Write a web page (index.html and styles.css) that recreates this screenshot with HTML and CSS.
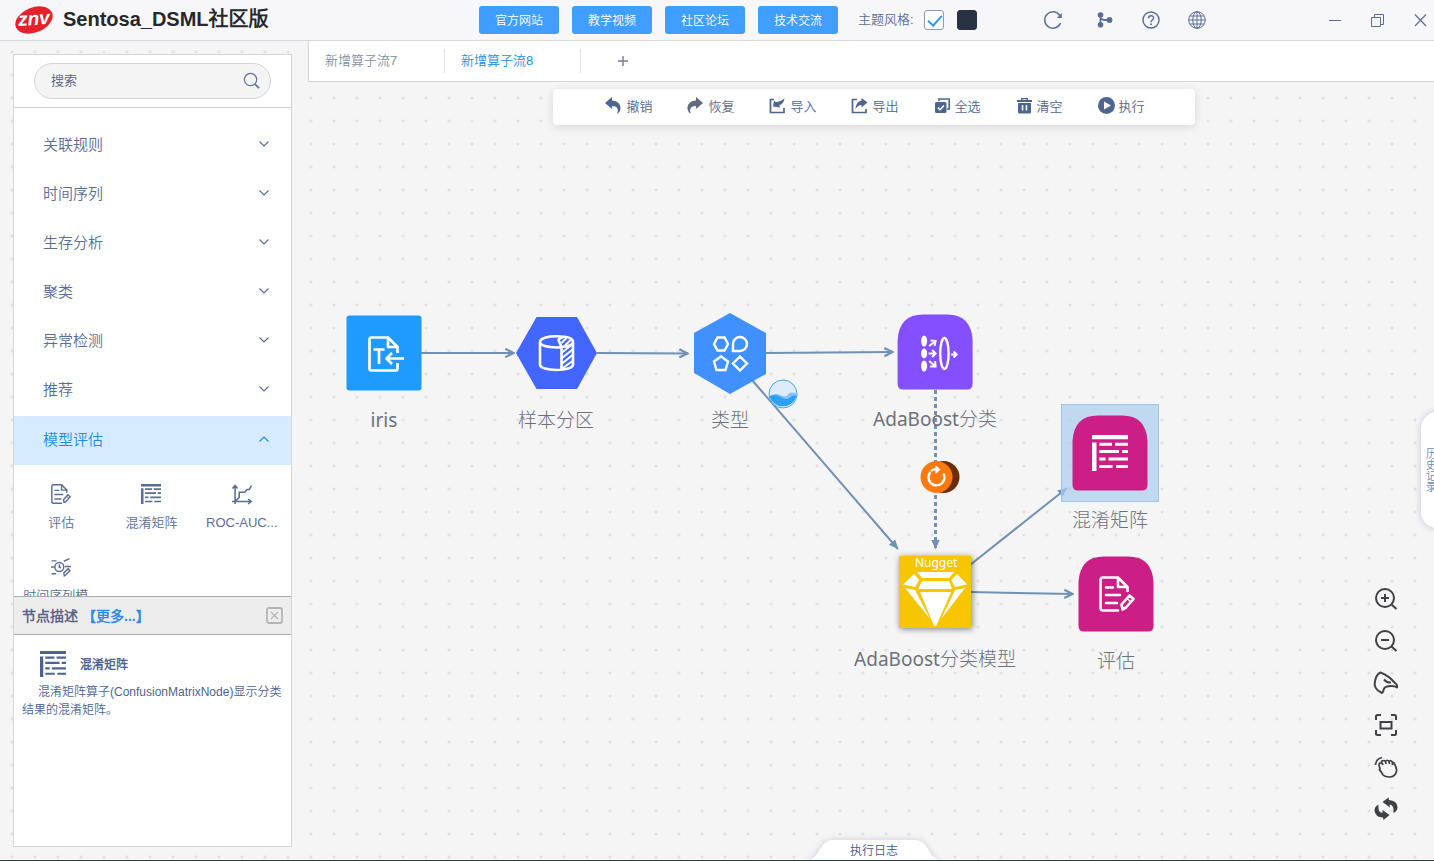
FILE: index.html
```html
<!DOCTYPE html>
<html lang="zh-CN">
<head>
<meta charset="utf-8">
<title>Sentosa_DSML社区版</title>
<link rel="stylesheet" href="styles.css">
</head>
<body>
<svg class="defs" aria-hidden="true">
  <symbol id="i-matrix" viewBox="0 0 36 36"><path fill="currentColor" d="M0 0h36v4.3H0zM0 7.5h4.5V36H0zM7.3 7.7H20v3H7.3zM23 7.7h13v3H23zM7.3 15H27v3H7.3zM30 15h6v3h-6zM7.3 22.6H13.500v3H7.300zM16.500 22.600H36v3H16.500zM7.300 30H20.500v3H7.300zM24 30h12v3H24z"/></symbol>
  <symbol id="i-report" viewBox="0 0 36 36"><g fill="none" stroke="currentColor" stroke-width="2.600" stroke-linejoin="round" stroke-linecap="round"><path d="M19 34.500H4Q1.500 34.500 1.500 32V4Q1.500 1.500 4 1.500H19L28.500 11V15M19 1.500V11H28.500M7 11.500H14M7 19H21M7 27H18M23.500 33.500L22.500 28.500L30.500 19.500L34.500 23L27 31.500Z"/><path stroke-width="1.600" d="M28 22.500L32 26"/></g></symbol>
  <symbol id="i-down" viewBox="0 0 12 12"><path fill="none" stroke="currentColor" stroke-width="1.200" d="M1.500 3.500L6 8L10.500 3.500"/></symbol>
</svg>

<header class="topbar">
  <div class="brand">
    <svg class="logo" viewBox="0 0 38 30" aria-hidden="true">
      <ellipse cx="19" cy="15" rx="19.500" ry="12.500" fill="#e3222b" transform="rotate(-22 19 15)"/>
      <text class="logo-text" x="19" y="20" text-anchor="middle" transform="rotate(-4 19 15)">znv</text>
    </svg>
    <h1>Sentosa_DSML社区版</h1>
  </div>
  <nav class="links">
    <button class="link-btn">官方网站</button>
    <button class="link-btn">教学视频</button>
    <button class="link-btn">社区论坛</button>
    <button class="link-btn">技术交流</button>
  </nav>
  <div class="theme">
    <label for="light">主题风格:</label>
    <input class="swatch light" id="light" type="checkbox" checked>
    <input class="swatch dark" type="checkbox" aria-label="深色">
  </div>
  <div class="sys">
    <button class="ico" aria-label="刷新"><svg viewBox="0 0 18 18"><path fill="none" stroke="currentColor" stroke-width="1.500" d="M15.800 4.500A8.200 8.200 0 1 0 16.600 12"/><path fill="currentColor" d="M17.800 2V7H12.800z"/></svg></button>
    <button class="ico share" aria-label="分支"><svg viewBox="0 0 18 18"><path fill="none" stroke="currentColor" stroke-width="1.800" d="M4.500 4V14M4.500 7.500L8 9H14"/><circle cx="4.500" cy="4" r="2.800" fill="currentColor"/><circle cx="4.500" cy="13.800" r="2.800" fill="currentColor"/><circle cx="13.500" cy="9" r="2.900" fill="currentColor"/></svg></button>
    <button class="ico" aria-label="帮助"><svg viewBox="0 0 18 18"><g fill="none" stroke="currentColor" stroke-width="1.400"><circle cx="9" cy="9" r="8"/><path d="M6.500 7.200C6.500 3.900 11.600 4 11.600 7C11.600 9 9 9 9 11.200"/></g><circle cx="9" cy="13.200" r="1" fill="currentColor"/></svg></button>
    <button class="ico" aria-label="语言"><svg viewBox="0 0 18 18"><g fill="none" stroke="currentColor" stroke-width="1"><circle cx="9" cy="9" r="8.300"/><ellipse cx="9" cy="9" rx="4.200" ry="8.300"/><path d="M9 .7V17.300M.7 9H17.300M2 5H16M2 13H16"/></g></svg></button>
  </div>
  <div class="win">
    <button class="ico" aria-label="最小化"><svg viewBox="0 0 18 18"><path stroke="currentColor" d="M3 9.500H15"/></svg></button>
    <button class="ico" aria-label="还原"><svg viewBox="0 0 18 18"><path fill="none" stroke="currentColor" d="M2.500 6.500H11.500V15.500H2.500ZM5.500 6V3.500H14.500V13.500H12"/></svg></button>
    <button class="ico" aria-label="关闭"><svg viewBox="0 0 18 18"><path stroke="currentColor" stroke-width="1.200" d="M3 3.500L14 15M14 3.500L3 15"/></svg></button>
  </div>
</header>

<div class="app">
  <aside class="sidebar">
    <div class="search">
      <input type="text" placeholder="搜索" aria-label="搜索">
      <svg class="search-ico" viewBox="0 0 18 18" aria-hidden="true"><circle cx="8" cy="8" r="6.500" fill="none" stroke="currentColor" stroke-width="1.300"/><path stroke="currentColor" stroke-width="1.800" d="M12.500 12.500L17 17"/></svg>
    </div>
    <div class="groups">
      <button class="group">关联规则<svg><use href="#i-down"/></svg></button>
      <button class="group">时间序列<svg><use href="#i-down"/></svg></button>
      <button class="group">生存分析<svg><use href="#i-down"/></svg></button>
      <button class="group">聚类<svg><use href="#i-down"/></svg></button>
      <button class="group">异常检测<svg><use href="#i-down"/></svg></button>
      <button class="group">推荐<svg><use href="#i-down"/></svg></button>
      <button class="group open">模型评估<svg><use href="#i-down"/></svg></button>
      <div class="ops">
        <button class="op"><svg><use href="#i-report"/></svg><span>评估</span></button>
        <button class="op"><svg><use href="#i-matrix"/></svg><span>混淆矩阵</span></button>
        <button class="op"><svg viewBox="0 0 36 36"><g fill="none" stroke="currentColor" stroke-width="2.800"><path d="M5.500 36V3M1 8L5.500 2.500L10 8M0 31.500H34M29 27L34.500 31.500L29 36M6 31L13 24V15H23L27 10H31L35 3"/></g></svg><span>ROC-AUC...</span></button>
        <button class="op"><svg viewBox="0 0 36 36"><g fill="none" stroke="currentColor" stroke-width="2.600"><circle cx="15" cy="18" r="8"/><path d="M15 13V19H18M1 7H10M0 18H6M1 30H9M23 8L33 3M25 17H36M24 34L23 29L31 21L34 24.500L27 32Z"/></g></svg><span>时间序列模...</span></button>
      </div>
    </div>
    <section class="desc">
      <div class="desc-head">
        <strong>节点描述</strong><a href="#">【更多...】</a>
        <button class="close" aria-label="关闭描述"><svg viewBox="0 0 17 17"><rect x="1" y="1" width="15" height="15" rx="2" fill="none" stroke="currentColor" stroke-width="1.800"/><path stroke="currentColor" stroke-width="1.200" d="M5 5L12 12M12 5L5 12"/></svg></button>
      </div>
      <div class="desc-title"><svg><use href="#i-matrix"/></svg><strong>混淆矩阵</strong></div>
      <p>混淆矩阵算子(ConfusionMatrixNode)显示分类结果的混淆矩阵。</p>
    </section>
  </aside>

  <main class="work">
    <div class="tabs">
      <button class="tab">新增算子流7</button>
      <button class="tab active">新增算子流8</button>
      <button class="add" aria-label="新增"><svg viewBox="0 0 12 12"><path stroke="currentColor" stroke-width="1.400" d="M6 1V11M1 6H11"/></svg></button>
    </div>
    <div class="stage">
      <div class="toolbar">
        <button class="tool"><svg viewBox="0 0 17 17"><path fill="currentColor" d="M0 6L7 0V3.500C13 3.500 16 8 15.500 12Q15 15.500 12 17C14 12 12.500 9 7 9V12Z"/></svg>撤销</button>
        <button class="tool grey"><svg viewBox="0 0 17 17"><path fill="currentColor" d="M16 6L9 0V3.500C3 3.500 0 8 .5 12Q1 15.500 4 17C2 12 3.500 9 9 9V12Z"/></svg>恢复</button>
        <button class="tool"><svg viewBox="0 0 17 17"><path fill="none" stroke="currentColor" stroke-width="1.700" d="M5 2.500H1.500V15.500H15V11"/><path fill="currentColor" d="M4 9.500L5 3.500L7 5.200Q11 5 15.500 1.500Q14.500 7 10 8.500L11.500 10.500Z"/></svg>导入</button>
        <button class="tool"><svg viewBox="0 0 17 17"><path fill="none" stroke="currentColor" stroke-width="1.700" d="M6 2.500H1.500V15.500H15V12"/><path fill="currentColor" d="M16.500 5.500L10.500 1V3.500Q5 4.500 4.500 12Q7 8 10.500 8V10.500Z"/></svg>导出</button>
        <button class="tool"><svg viewBox="0 0 17 17"><path fill="none" stroke="currentColor" stroke-width="1.600" d="M5 4V2H15.200V12H13"/><rect x="1" y="5" width="11.500" height="11" rx="1.500" fill="currentColor"/><path fill="none" stroke="#fff" stroke-width="1.500" d="M3.800 10.500L6 12.700L10 8.500"/></svg>全选</button>
        <button class="tool"><svg viewBox="0 0 17 17"><path fill="currentColor" d="M1 3H5V1H12V3H16V5H1ZM6.500 2.300V3H10.500V2.300ZM2 6H15V15Q15 16.500 13.500 16.500H3.500Q2 16.500 2 15ZM5.800 8V13.500H7.300V8ZM9.700 8V13.500H11.200V8Z" fill-rule="evenodd"/></svg>清空</button>
        <button class="tool"><svg viewBox="0 0 17 17"><circle cx="8.500" cy="8.500" r="8.500" fill="currentColor"/><path fill="#fff" d="M6 4.500L13 8.500L6 12.500Z"/></svg>执行</button>
      </div>

      <svg class="edges" aria-hidden="true">
        <defs>
          <marker id="arrow" viewBox="0 0 12 12" refX="11" refY="6" markerWidth="11" markerHeight="11" markerUnits="userSpaceOnUse" orient="auto"><path d="M1.500 1.500L10.500 6L1.500 10.500" fill="none" stroke="#7090b4" stroke-width="2.400"/></marker>
          <marker id="arrow-full" viewBox="0 0 12 12" refX="11" refY="6" markerWidth="10" markerHeight="10" markerUnits="userSpaceOnUse" orient="auto"><path d="M0 1L11.500 6L0 11Z" fill="#7090b4"/></marker>
        </defs>
        <g transform="translate(-308 -82)" fill="none" stroke="#7090b4" stroke-width="2">
          <path marker-end="url(#arrow)" d="M421 353H514"/>
          <path marker-end="url(#arrow)" d="M597 353L688 353.500"/>
          <path marker-end="url(#arrow)" d="M766 353L893 352"/>
          <path marker-end="url(#arrow-full)" d="M752 380L898 549"/>
          <path marker-end="url(#arrow-full)" stroke-width="3" stroke-dasharray="4 3" d="M935.500 390V549"/>
          <path marker-end="url(#arrow-full)" d="M970 565L1067 488"/>
          <path marker-end="url(#arrow)" d="M970 592L1073 594"/>
        </g>
      </svg>

      <div class="node n-iris">
        <svg viewBox="0 0 80 80"><rect x="2.500" y="2.500" width="75" height="75" rx="3" fill="#1f9bff"/>
          <g transform="translate(24 23)" fill="none" stroke="#fff" stroke-width="2.700" stroke-linejoin="round"><path d="M29.500 17V11L20 1.500H3.500Q1.500 1.500 1.500 3.500V32.500Q1.500 34.500 3.500 34.500H27.500Q29.500 34.500 29.500 32.500V27M20 1.500V11H29.500M5.500 13.500H16.500M11 13.500V28M36 22.500H19M24 17L18.500 22.500L24 28"/></g></svg>
        <span>iris</span>
      </div>
      <div class="node n-part">
        <svg viewBox="0 0 80 80"><path fill="#4366ff" d="M0 40L20.500 4H61L81 40L61 76H20.500Z"/>
          <g transform="translate(22.500 22)" fill="none" stroke="#fff" stroke-width="2.600" stroke-linejoin="round"><path d="M1.500 7C1.500 3 9 1.300 18 1.300S34.500 3 34.500 7V29.500C34.500 33 27 35 18 35S1.500 33 1.500 29.500ZM1.500 7C1.500 10.500 9 12.500 18 12.500Q21 12.500 23 12V34.500M23 12L20 5Q21 3 25 2M23 12Q34.500 11 34.500 7"/><path stroke-width="2" d="M23 8L28 3M26 11L33 4M23 18L34 9M23 23.500L34 14.500M23 29L34 20M23 34L34 26"/></g></svg>
        <span>样本分区</span>
      </div>
      <div class="node n-type">
        <svg viewBox="0 0 80 80"><path fill="#4190ff" d="M40 0L76 20V61L40 81L4 60V20Z"/>
          <g transform="translate(22.500 23)" fill="none" stroke="#fff" stroke-width="2.400"><path d="M1.500 8L5 1.500H12L15.500 8L12 14.500H5ZM20.500 15V8.500A7 7 0 1 1 27.500 15ZM8.500 20.500L15.500 25.500L13 34H4L1.500 25.500ZM27.500 20.500L34.500 27.500L27.500 34.500L20.500 27.500Z"/></g></svg>
        <span>类型</span>
      </div>
      <div class="node n-ada">
        <svg viewBox="0 0 80 80"><path fill="#8450ff" d="M2.500 28Q4 2.500 28 2.500H52Q76 2.500 77.500 28V72Q77.500 77.500 72 77.500H8Q2.500 77.500 2.500 72Z"/>
          <g fill="#fff"><ellipse cx="29" cy="29" rx="3" ry="5.500"/><ellipse cx="29" cy="41.500" rx="3" ry="5"/><ellipse cx="29" cy="54" rx="3" ry="5.500"/></g>
          <g fill="none" stroke="#fff" stroke-width="2"><ellipse cx="49.300" cy="41.500" rx="4.200" ry="15.500" stroke-width="2.400"/><path d="M34 34L40 29.500M35.500 28.500L40.500 29L39.500 34M33.500 41.500H40M37 38L40.500 41.500L37 45M34 49L40 54M40 49L40.500 54.500L35 54.500M56 42.500H61M58.500 39.500L61.500 42.500L58.500 45.500"/></g></svg>
        <span>AdaBoost分类</span>
      </div>
      <div class="node n-nugget">
        <svg viewBox="0 0 80 80"><rect class="shadow" x="4" y="4" width="72" height="72" fill="#f7c600"/>
          <text class="nugget-text" x="41" y="15" text-anchor="middle">Nugget</text>
          <path fill="#fff" d="M22 20H59L54 26H27ZM19 22L24 28L20 35L8 32.500ZM62 22L72 32.500L60 35L56 28ZM27 29H54L57 37H23ZM10 36L20 38L35 67ZM70 36L60 38L46 67ZM25 40H56L41 74H39Z"/></svg>
        <span>AdaBoost分类模型</span>
      </div>
      <div class="node n-matrix">
        <svg viewBox="0 0 80 80"><rect x="-8.500" y="-8.500" width="97" height="97" fill="#a9cdf0" fill-opacity=".7" stroke="#a4c4ec"/><path fill="#cc1f86" d="M2.500 28Q4 2.500 28 2.500H52Q76 2.500 77.500 28V72Q77.500 77.500 72 77.500H8Q2.500 77.500 2.500 72Z"/><use href="#i-matrix" x="22" y="22" width="36" height="36" color="#fff"/></svg>
        <span>混淆矩阵</span>
      </div>
      <div class="node n-eval">
        <svg viewBox="0 0 80 80"><path fill="#cc1f86" d="M2.500 28Q4 2.500 28 2.500H52Q76 2.500 77.500 28V72Q77.500 77.500 72 77.500H8Q2.500 77.500 2.500 72Z"/><use href="#i-report" x="23" y="22" width="36" height="36" color="#fff"/></svg>
        <span>评估</span>
      </div>

      <svg class="badge b-wave" viewBox="0 0 30 30" aria-hidden="true"><circle cx="15" cy="15" r="14" fill="#dcecfb"/><path fill="#84c3f8" d="M1.500 18Q6 13 12 16T20 15.500T28.500 15A14 14 0 0 1 1.500 18Z"/><path fill="#2ba0fb" d="M1.500 17Q7 14.500 13 18T22 18.500T28.500 17A14 14 0 0 1 1.500 17Z"/><circle cx="15" cy="15" r="14" fill="none" stroke="#45a5f5"/></svg>
      <svg class="badge b-retry" viewBox="0 0 40 34" aria-hidden="true"><circle cx="23.500" cy="17" r="16" fill="#6e2c08"/><circle cx="16.500" cy="17" r="16" fill="#ff7a0e"/><path fill="none" stroke="#fff" stroke-width="2.400" d="M10.500 12A8 8 0 1 0 23.500 13.500M11 11Q13 9 17 9.500"/><path fill="#fff" d="M15.500 5L20.500 9.500L15.500 14Z"/></svg>

      <div class="view-tools">
        <button aria-label="放大"><svg viewBox="0 0 24 24"><g fill="none" stroke="currentColor" stroke-width="2"><circle cx="11" cy="11" r="9"/><path d="M11 7V15M7 11H15M17.500 17.500L22.500 22"/></g></svg></button>
        <button aria-label="缩小"><svg viewBox="0 0 24 24"><g fill="none" stroke="currentColor" stroke-width="2"><circle cx="11" cy="11" r="9"/><path d="M7 11H15M17.500 17.500L22.500 22"/></g></svg></button>
        <button aria-label="鹰眼"><svg viewBox="0 0 24 24"><g fill="none" stroke="currentColor" stroke-width="2" stroke-linejoin="round"><path d="M8 22Q-1 18 1 10Q2.500 3 6.500 1.500Q15 5 20 11Q24 14 23 16.500Q21 15 17.500 15Q10 15 9.500 19Q9.500 21 8 22Z"/><path d="M10 8.500Q13 12 17 11.500"/></g></svg></button>
        <button aria-label="适应画布"><svg viewBox="0 0 24 24"><g fill="none" stroke="currentColor" stroke-width="2"><path d="M2 7V3.500Q2 2 3.500 2H7M17 2H20.500Q22 2 22 3.500V7M22 17V20.500Q22 22 20.500 22H17M7 22H3.500Q2 22 2 20.500V17"/><rect x="6.500" y="9" width="11" height="6.500"/></g></svg></button>
        <button aria-label="拖动"><svg viewBox="0 0 24 24"><g fill="none" stroke="currentColor" stroke-width="1.700" stroke-linejoin="round"><path d="M1.500 10Q2 4 8 2.500"/><path d="M6 14L5 10Q5 7.500 7.500 8Q7 5.500 9.500 5.500Q11 5.500 11.500 6.500Q13 4 15 6.500Q17 4.500 18.500 7.500Q20 7 20.500 9Q23 13 22.500 16Q21.500 22 15.500 22Q11 22 9 20L7 16.500Q4.500 14.500 6 14ZM8 8L9 10M11.500 6.500L12 9M15 6.500L15.500 9M18.500 7.500V10"/></g></svg></button>
        <button aria-label="重置"><svg viewBox="0 0 24 24"><path fill="currentColor" d="M8.500 5L14.500 .5L15 3Q23 3.500 23.500 10Q23.500 14 19.500 16Q20.500 8 15.500 7.500L16 10.500ZM15.500 18L9.500 23L9 20.500Q1 20 .5 13.500Q.5 9.500 4.500 7.500Q3.500 15.500 8.500 16L8.500 13Z"/></svg></button>
      </div>
      <button class="history">历史记录</button>
      <button class="log"><svg viewBox="0 0 134 22" aria-hidden="true"><path fill="#fff" d="M0 22Q8 20 13 10Q18 1 26 1H108Q116 1 121 10Q126 20 134 22Z"/></svg><span>执行日志</span></button>
    </div>
  </main>
</div>
</body>
</html>
```
FILE: styles.css
```css
* { box-sizing: border-box; }

body {
  margin: 0;
  height: 100vh;
  display: flex;
  flex-direction: column;
  overflow: hidden;
  color: #5a6d96;
  font-family: "Liberation Sans", "Noto Sans CJK SC DemiLight", "Noto Sans CJK SC", sans-serif;
  font-size: 13px;
  font-weight: 400;
  background: #f5f5f5 radial-gradient(circle at 12px 6px, #e0e1e3 1px, transparent 2px) 0 0 / 23px 23px;
  border-bottom: 1px solid #2f4744;
}

button {
  margin: 0;
  padding: 0;
  border: 0;
  background: none;
  color: inherit;
  font: inherit;
  cursor: pointer;
}

svg { display: block; overflow: visible; }
.defs { position: absolute; width: 0; height: 0; }

/* Top bar */
.topbar {
  flex: none;
  display: flex;
  align-items: center;
  height: 41px;
  padding-right: 4px;
  background: #f7f7fa;
  border-bottom: 1px solid #d6d8dd;
}
.brand {
  width: 33.5%;
  display: flex;
  align-items: center;
  gap: 10px;
  padding-left: 15px;
}
.logo { width: 38px; height: 30px; }
.logo-text {
  fill: #fff;
  font: italic bold 19px "Liberation Sans", sans-serif;
}
h1 {
  margin: 0;
  color: #26282c;
  font-size: 20px;
  font-weight: 700;
  line-height: 24px;
  padding-bottom: 2px;
  white-space: nowrap;
}
.links { display: flex; flex: none; gap: 13px; }
.link-btn {
  width: 80px;
  height: 28px;
  padding-bottom: 2px;
  border-radius: 3px;
  background: #409eff;
  color: #fff;
  font-size: 12px;
  font-weight: 500;
}
.theme {
  display: flex;
  align-items: center;
  flex: none;
  margin-left: 20px;
}
.theme label { padding-bottom: 3px; }
.swatch {
  appearance: none;
  width: 20px;
  height: 20px;
  margin: 0 0 0 10px;
  border: 1px solid #8b9bb8;
  border-radius: 3px;
}
.light { position: relative; background: #fff; }
.light:checked::after {
  content: "";
  position: absolute;
  left: 6px;
  top: 1px;
  width: 6px;
  height: 12px;
  border: solid #2b9af5;
  border-width: 0 2px 2px 0;
  transform: rotate(42deg);
}
.dark { margin-left: 13px; background: #293244; border-color: #293244; }
.sys { display: flex; gap: 28px; margin-left: auto; }
.share { margin: 0 0 0 6px; }
.win { display: flex; gap: 25px; margin-left: 120px; }
.ico, .ico svg { width: 18px; height: 18px; }

/* Body */
.app { flex: 1; min-height: 0; display: flex; }

.sidebar {
  flex: none;
  width: 279px;
  margin: 13px 16px 13px 13px;
  display: flex;
  flex-direction: column;
  background: #fff;
  border: 1px solid #d3d5da;
}
.search {
  position: relative;
  flex: none;
  padding: 8px 20px;
  border-bottom: 1px solid #d3d5da;
}
.search input {
  display: block;
  width: 100%;
  height: 36px;
  padding: 0 48px 2px 16px;
  border: 1px solid #d3d5dd;
  border-radius: 18px;
  background: #f4f4f5;
  color: #566080;
  font: inherit;
}
.search input::placeholder { color: #566080; opacity: 1; }
.search-ico {
  position: absolute;
  right: 31px;
  top: 17px;
  width: 17px;
  height: 17px;
  color: #6070a0;
}
.groups { flex: 1; min-height: 0; padding-top: 13px; overflow: hidden; }
.group {
  display: flex;
  align-items: center;
  justify-content: space-between;
  width: 100%;
  height: 49px;
  padding: 0 21px 4px 29px;
  font-size: 15px;
}
.group svg { width: 12px; height: 12px; }
.open { margin-top: 1px; background: #d6ebff; color: #1c8ee8; }
.open svg { transform: rotate(180deg); }
.ops {
  display: grid;
  grid-template-columns: repeat(3, 1fr);
  padding: 19px 4px 0 2px;
}
.op {
  display: flex;
  flex-direction: column;
  align-items: center;
  gap: 9px;
  height: 73px;
  white-space: nowrap;
}
.op svg { width: 20px; height: 20px; }
.op span { line-height: 20px; }

.desc {
  flex: none;
  height: 29vh;
  color: #4d6394;
  font-size: 12px;
}
.desc-head {
  display: flex;
  align-items: center;
  height: 39px;
  padding: 0 8px;
  background: #ededed;
  border: solid #acacac;
  border-width: 1px 0;
  font-size: 14px;
}
.desc-head strong { padding-bottom: 2px; font-weight: 700; color: #5a6485; }
.desc-head a { padding-bottom: 2px; color: #2f8bf0; font-weight: 700; text-decoration: none; margin-left: 4px; }
.close { margin-left: auto; color: #b4b4b4; }
.close svg { width: 17px; height: 17px; }
.desc-title {
  display: flex;
  align-items: center;
  gap: 14px;
  padding: 16px 26px 6px;
}
.desc-title strong { padding-bottom: 2px; font-weight: 700; }
.desc-title svg { width: 26px; height: 26px; }
.desc p {
  margin: 0;
  padding: 0 8px;
  line-height: 18px;
  text-indent: 16px;
}

/* Work area */
.work { flex: 1; min-width: 0; display: flex; flex-direction: column; }
.tabs {
  flex: none;
  display: flex;
  align-items: center;
  height: 41px;
  background: #fff;
  border: solid #d3d5da;
  border-width: 0 0 1px 1px;
}
.tab {
  width: 136px;
  height: 24px;
  padding: 0 0 3px 16px;
  border-right: 1px solid #dfe1e6;
  color: #878fa3;
  text-align: left;
}
.active { color: #1c8ee8; }
.add { margin-left: 36px; color: #777e8c; }
.add svg { width: 12px; height: 12px; }

.stage { flex: 1; position: relative; padding-left: 6px; }
.toolbar {
  display: flex;
  align-items: center;
  justify-content: center;
  gap: 35px;
  width: 642px;
  max-width: 100%;
  height: 36px;
  margin: 7px auto 0;
  padding: 0 0 3px 2px;
  border-radius: 4px;
  background: #fff;
  box-shadow: 0 2px 10px rgba(0, 0, 0, .12);
}
.tool { display: flex; align-items: center; gap: 4px; color: #4d6591; }
.tool svg { width: 17px; height: 17px; }
.grey { color: #626b7e; }

.edges {
  position: absolute;
  left: 0;
  top: 0;
  width: 100%;
  height: 100%;
  pointer-events: none;
}
.node {
  position: absolute;
  display: flex;
  flex-direction: column;
  align-items: center;
  gap: 13px;
  transform: translateX(-50%);
  color: #6e717c;
  font-family: "Noto Sans", "Noto Sans CJK SC Light", "Noto Sans CJK SC", sans-serif;
  font-size: 19px;
  line-height: 28px;
  white-space: nowrap;
}
.node svg { width: 80px; height: 80px; }
.n-iris { left: 76px; top: 231px; }
.n-part { left: 248px; top: 231px; }
.n-type { left: 422px; top: 231px; }
.n-ada { left: 627px; top: 230px; }
.n-nugget { left: 627px; top: 470px; }
.n-matrix { left: 802px; top: 331px; }
.n-eval { left: 808px; top: 472px; }
.nugget-text { fill: #fff; font: 12px "Noto Sans", sans-serif; }
.shadow { filter: drop-shadow(1px 1px 3px rgba(0, 0, 0, .5)); }

.badge { position: absolute; }
.b-wave { left: 460px; top: 297px; width: 30px; height: 30px; }
.b-retry { left: 612px; top: 378px; width: 40px; height: 34px; }

.view-tools {
  position: absolute;
  right: 36px;
  bottom: 39px;
  display: flex;
  flex-direction: column;
  gap: 18px;
  color: #3f4144;
}
.view-tools svg { width: 24px; height: 24px; }

.history {
  position: absolute;
  right: -6px;
  top: 330px;
  width: 19px;
  height: 116px;
  border-radius: 16px 0 0 16px;
  background: #fff;
  box-shadow: 0 0 6px rgba(80, 80, 140, .3);
  color: #7185b5;
  font-size: 11px;
  line-height: 14px;
  writing-mode: vertical-rl;
  text-align: center;
  overflow: hidden;
}
.log {
  position: absolute;
  left: 50%;
  bottom: 0;
  width: 134px;
  height: 21px;
  margin-left: -64px;
  color: #40588a;
  font-size: 12px;
}
.log svg {
  position: absolute;
  left: 0;
  top: 0;
  width: 134px;
  height: 22px;
  filter: drop-shadow(0 0 3px rgba(80, 80, 140, .25));
}
.log span { position: relative; }
```
